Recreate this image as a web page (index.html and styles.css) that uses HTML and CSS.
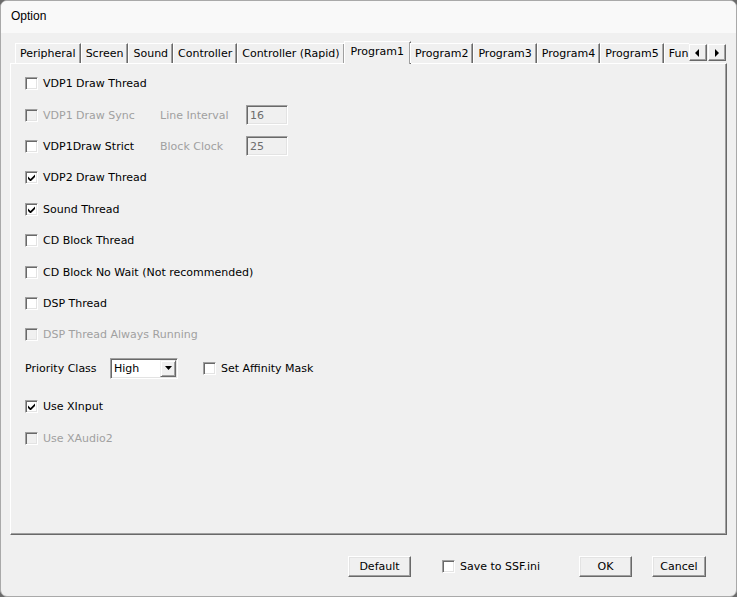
FILE: index.html
```html
<!DOCTYPE html>
<html lang="en">
  <head>
    <meta charset="UTF-8" />
    <title>Option</title>
    <link rel="stylesheet" href="styles.css">
  </head>
  <body>
    <div class="window">
      <div class="titlebar">Option</div>
      <div class="client">
        <div class="tabs">
          <div class="tab">Peripheral</div>
          <div class="tab">Screen</div>
          <div class="tab">Sound</div>
          <div class="tab">Controller</div>
          <div class="tab">Controller (Rapid)</div>
          <div class="tab active">Program1</div>
          <div class="tab">Program2</div>
          <div class="tab">Program3</div>
          <div class="tab">Program4</div>
          <div class="tab">Program5</div>
          <div class="tab clip">Fun</div>
          <div class="spin">
            <span class="arrow"><svg width="5" height="8"><path d="M4 0v8L0 4z" fill="#000"/></svg></span>
            <span class="arrow"><svg width="5" height="8"><path d="M1 0v8l4-4z" fill="#000"/></svg></span>
          </div>
        </div>

        <div class="panel">
          <div class="row"><span class="check"></span>VDP1 Draw Thread</div>
          <div class="row disabled">
            <span class="check"></span><span class="lbl">VDP1 Draw Sync</span>
            <span class="sub">Line Interval</span><span class="field">16</span>
          </div>
          <div class="row">
            <span class="check"></span><span class="lbl">VDP1Draw Strict</span>
            <span class="sub grey">Block Clock</span><span class="field">25</span>
          </div>
          <div class="row"><span class="check on"></span>VDP2 Draw Thread</div>
          <div class="row"><span class="check on"></span>Sound Thread</div>
          <div class="row"><span class="check"></span>CD Block Thread</div>
          <div class="row"><span class="check"></span>CD Block No Wait (Not recommended)</div>
          <div class="row"><span class="check"></span>DSP Thread</div>
          <div class="row disabled"><span class="check"></span>DSP Thread Always Running</div>

          <div class="row priority">
            <span class="plabel">Priority Class</span>
            <span class="combo"><span class="value">High</span><span class="drop"><svg width="7" height="4"><path d="M0 0h7L3.5 4z" fill="#000"/></svg></span></span>
            <span class="check"></span>Set Affinity Mask
          </div>
          <div class="row xinput"><span class="check on"></span>Use XInput</div>
          <div class="row xaudio disabled"><span class="check"></span>Use XAudio2</div>
        </div>

        <div class="footer">
          <button class="btn default">Default</button>
          <span class="save"><span class="check"></span>Save to SSF.ini</span>
          <button class="btn ok">OK</button>
          <button class="btn cancel">Cancel</button>
        </div>
      </div>
    </div>
  </body>
</html>
```

FILE: styles.css
```css
body {
  margin: 0;
  background-color: #6b6b6b;
  font-family: "DejaVu Sans", Tahoma, sans-serif;
  font-size: 11px;
  color: #000;
}

.window {
  width: 735px;
  height: 595px;
  border: 1px solid #a9a9a9;
  border-radius: 7px;
  background-color: #f0f0f0;
  overflow: hidden;
}

.titlebar {
  height: 32px;
  line-height: 31px;
  padding-left: 10px;
  background-color: #f9f9f9;
  font-family: "Liberation Sans", Arial, sans-serif;
  font-size: 12px;
}

.client {
  padding: 8px 9px 0 9px;
}

.tabs {
  display: flex;
  align-items: flex-end;
  height: 22px;
  padding-left: 5px;
  position: relative;
  z-index: 1;
}

.tab {
  height: 20px;
  line-height: 19px;
  padding: 0 4px;
  border-top: 1px solid #fff;
  border-left: 1px solid #fff;
  border-right: 1px solid #696969;
  box-shadow: inset -1px 0 #a0a0a0;
  box-sizing: border-box;
  white-space: nowrap;
  color: #000;
}

.tab.active {
  height: 23px;
  margin: 0 -1px -1px -1px;
  padding: 0 6px 0 6px;
  line-height: 20px;
  background-color: #f0f0f0;
}

.tab.clip {
  width: 25px;
  overflow: hidden;
  border-right: none;
  box-shadow: none;
}

.spin {
  display: flex;
  margin-bottom: 2px;
}

.arrow {
  width: 18px;
  height: 17px;
  box-sizing: border-box;
  display: flex;
  align-items: center;
  justify-content: center;
  background-color: #f0f0f0;
  border: 1px solid;
  border-color: #fff #696969 #696969 #fff;
  box-shadow: inset -1px -1px #a0a0a0;
}

.arrow + .arrow {
  margin-left: 1px;
}

.panel {
  height: 472px;
  box-sizing: border-box;
  border: 1px solid;
  border-color: #fff #696969 #696969 #fff;
  box-shadow: inset -1px -1px #a0a0a0;
  padding: 4px 0 0 14px;
}

.row {
  display: flex;
  align-items: center;
  height: 31.4px;
  white-space: nowrap;
}

.check {
  width: 13px;
  height: 13px;
  box-sizing: border-box;
  flex: none;
  margin-right: 5px;
  background-color: #fff;
  border: 1px solid;
  border-color: #a0a0a0 #fff #fff #a0a0a0;
  box-shadow: inset 1px 1px #696969, inset -1px -1px #e3e3e3;
}

.check.on {
  background-repeat: no-repeat;
  background-position: 2px 2px;
  background-image: url("data:image/svg+xml;utf8,<svg xmlns='http://www.w3.org/2000/svg' width='7' height='7'><path d='M0 2.5l2.5 2.5L7 0.5v2.5L2.5 7.5 0 5z' fill='black'/></svg>");
}

.disabled {
  color: #a0a0a0;
}

.disabled .check {
  background-color: #f0f0f0;
}

.lbl {
  width: 117px;
}

.sub {
  width: 86px;
  color: #a0a0a0;
}

.field {
  width: 42px;
  height: 20px;
  line-height: 19px;
  box-sizing: border-box;
  padding-left: 3px;
  color: #6d6d6d;
  border: 1px solid;
  border-color: #a0a0a0 #fff #fff #a0a0a0;
  box-shadow: inset 1px 1px #696969, inset -1px -1px #e3e3e3;
}

.priority {
  height: 35px;
}

.plabel {
  width: 85px;
}

.combo {
  display: flex;
  align-items: center;
  width: 68px;
  height: 21px;
  box-sizing: border-box;
  margin-right: 25px;
  background-color: #fff;
  border: 1px solid;
  border-color: #a0a0a0 #fff #fff #a0a0a0;
  box-shadow: inset 1px 1px #696969, inset -1px -1px #e3e3e3;
}

.value {
  flex: 1;
  padding-left: 3px;
  line-height: 15px;
}

.drop {
  width: 16px;
  height: 17px;
  margin-right: 1px;
  box-sizing: border-box;
  display: flex;
  align-items: center;
  justify-content: center;
  background-color: #f0f0f0;
  border: 1px solid;
  border-color: #f0f0f0 #696969 #696969 #f0f0f0;
  box-shadow: inset 1px 1px #fff, inset -1px -1px #a0a0a0;
}

.xinput {
  margin-top: 5px;
}

.xaudio {
  margin-top: 1px;
}

.footer {
  display: flex;
  align-items: center;
  height: 62px;
  padding-left: 338px;
}

.btn {
  height: 21px;
  padding: 0;
  font: inherit;
  color: #000;
  background-color: #f0f0f0;
  border: 1px solid;
  border-color: #fff #696969 #696969 #fff;
  box-shadow: inset -1px -1px #a0a0a0, inset 1px 1px #e3e3e3;
}

.default {
  width: 63px;
}

.save {
  display: flex;
  align-items: center;
  margin-left: 31px;
  width: 137px;
}

.ok {
  width: 53px;
}

.cancel {
  width: 54px;
  margin-left: 20px;
}
```
